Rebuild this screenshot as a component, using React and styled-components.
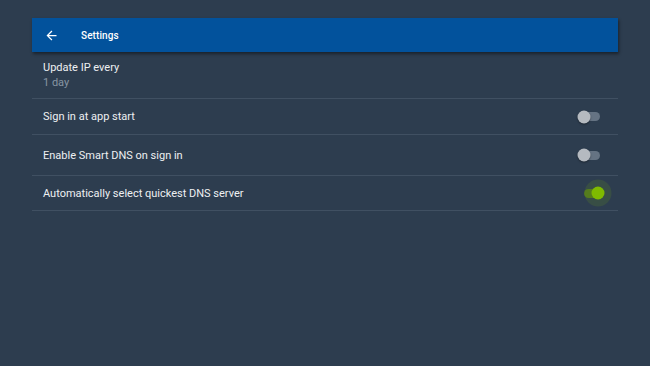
import React from "react";
import styled, { createGlobalStyle } from "styled-components";

const Global = createGlobalStyle`
  html, body {
    margin: 0;
    background: #2d3d4f;
    font-family: Roboto, "Liberation Sans", sans-serif;
  }
`;

const Page = styled.div`
  width: 650px;
  height: 366px;
  padding: 18px 32px 0 32px;
  box-sizing: border-box;
`;

const Toolbar = styled.div`
  height: 34px;
  background: #02529c;
  display: flex;
  align-items: center;
  box-shadow: 1px 2px 3px rgba(0, 0, 0, 0.45);
  color: #fff;
`;

const Back = styled.div`
  width: 49px;
  padding-left: 12px;
  box-sizing: border-box;
  display: flex;
  align-items: center;
`;

const Title = styled.div`
  font-size: 10px;
  font-weight: 500;
  letter-spacing: 0.1px;
`;

const Row = styled.div`
  height: ${(p) => p.h}px;
  box-sizing: border-box;
  border-bottom: 1px solid #405062;
  display: flex;
  align-items: center;
  justify-content: space-between;
  padding: 0 18px 0 11px;
`;

const Label = styled.div`
  color: #edf0f2;
  font-size: 11px;
`;

const Sub = styled.div`
  color: #8795a3;
  font-size: 11px;
  margin-top: 2px;
`;

const Track = styled.div`
  position: relative;
  width: 16px;
  height: 9px;
  border-radius: 5px;
  background: ${(p) => (p.on ? "#4f7420" : "#657383")};
`;

const Thumb = styled.div`
  position: absolute;
  top: 50%;
  left: ${(p) => (p.on ? "14px" : "0")};
  width: 13px;
  height: 13px;
  border-radius: 50%;
  transform: translate(-50%, -50%);
  background: ${(p) => (p.on ? "#7fba00" : "#b5bac0")};
  box-shadow: ${(p) =>
    p.on ? "0 0 0 7px rgba(120, 170, 20, 0.16)" : "0 1px 2px rgba(0,0,0,0.4)"};
`;

const Toggle = ({ on }) => (
  <Track on={on ? 1 : 0}>
    <Thumb on={on ? 1 : 0} />
  </Track>
);

export default function App() {
  return (
    <Page>
      <Global />
      <Toolbar>
        <Back>
          <svg width="15" height="15" viewBox="0 0 24 24">
            <path
              d="M20 11H7.83l5.59-5.59L12 4l-8 8 8 8 1.41-1.41L7.83 13H20v-2z"
              fill="#fff"
            />
          </svg>
        </Back>
        <Title>Settings</Title>
      </Toolbar>
      <Row h={47}>
        <div>
          <Label>Update IP every</Label>
          <Sub>1 day</Sub>
        </div>
      </Row>
      <Row h={36}>
        <Label>Sign in at app start</Label>
        <Toggle />
      </Row>
      <Row h={41}>
        <Label>Enable Smart DNS on sign in</Label>
        <Toggle />
      </Row>
      <Row h={35}>
        <Label>Automatically select quickest DNS server</Label>
        <Toggle on />
      </Row>
    </Page>
  );
}
